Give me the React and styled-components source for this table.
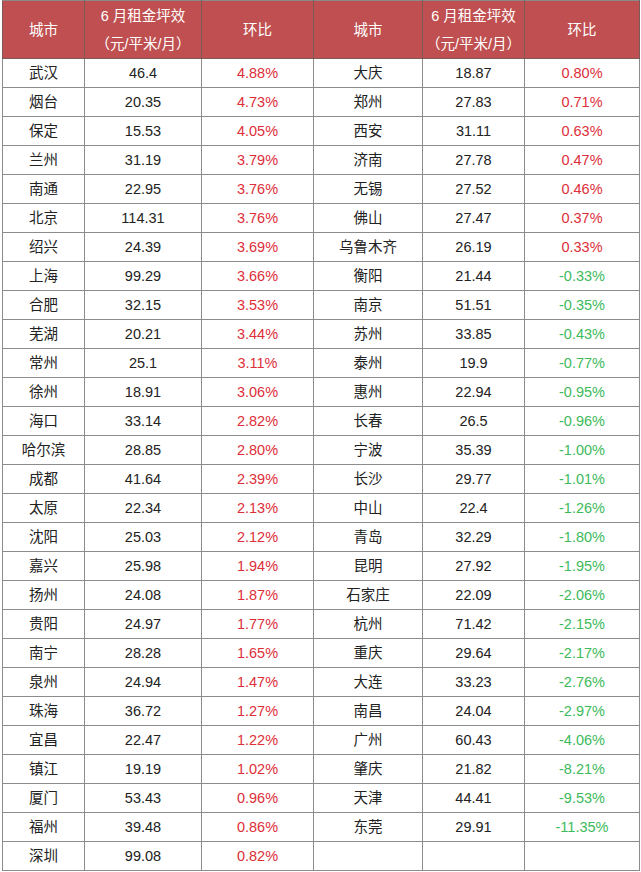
import React from "react";
import styled, { createGlobalStyle } from "styled-components";

const Global = createGlobalStyle`
  html, body { margin: 0; padding: 0; background: #fff; }
  body { font-family: "Liberation Sans", "Noto Sans CJK SC", sans-serif; }
`;

const Wrap = styled.div`
  padding: 0 0 0 2px;
  width: 641px;
  box-sizing: border-box;
`;

const Table = styled.table`
  border-collapse: collapse;
  table-layout: fixed;
  width: 637px;
  font-size: 14.5px;
`;

const Col = styled.col`
  width: ${(p) => p.$w}px;
`;

const HeadCell = styled.th`
  background: #bf4f50;
  color: #fff;
  font-weight: normal;
  height: 57px;
  padding: 0;
  border: 1px solid #7d5a5a;
  border-top-color: #8a8a8a;
  text-align: center;
  vertical-align: middle;
  line-height: 28px;
  font-size: 14.5px;
`;

const Cell = styled.td`
  height: 28px;
  padding: 0;
  border: 1px solid #8c8c8c;
  text-align: center;
  vertical-align: middle;
  color: ${(p) => (p.$tone === "up" ? "#dd2e3a" : p.$tone === "down" ? "#3dba5b" : "#222")};
  line-height: 28px;
`;

const widths = [82, 117, 112, 109, 102, 115];

const left = [
  ["武汉", "46.4", "4.88%"],
  ["烟台", "20.35", "4.73%"],
  ["保定", "15.53", "4.05%"],
  ["兰州", "31.19", "3.79%"],
  ["南通", "22.95", "3.76%"],
  ["北京", "114.31", "3.76%"],
  ["绍兴", "24.39", "3.69%"],
  ["上海", "99.29", "3.66%"],
  ["合肥", "32.15", "3.53%"],
  ["芜湖", "20.21", "3.44%"],
  ["常州", "25.1", "3.11%"],
  ["徐州", "18.91", "3.06%"],
  ["海口", "33.14", "2.82%"],
  ["哈尔滨", "28.85", "2.80%"],
  ["成都", "41.64", "2.39%"],
  ["太原", "22.34", "2.13%"],
  ["沈阳", "25.03", "2.12%"],
  ["嘉兴", "25.98", "1.94%"],
  ["扬州", "24.08", "1.87%"],
  ["贵阳", "24.97", "1.77%"],
  ["南宁", "28.28", "1.65%"],
  ["泉州", "24.94", "1.47%"],
  ["珠海", "36.72", "1.27%"],
  ["宜昌", "22.47", "1.22%"],
  ["镇江", "19.19", "1.02%"],
  ["厦门", "53.43", "0.96%"],
  ["福州", "39.48", "0.86%"],
  ["深圳", "99.08", "0.82%"],
];

const right = [
  ["大庆", "18.87", "0.80%"],
  ["郑州", "27.83", "0.71%"],
  ["西安", "31.11", "0.63%"],
  ["济南", "27.78", "0.47%"],
  ["无锡", "27.52", "0.46%"],
  ["佛山", "27.47", "0.37%"],
  ["乌鲁木齐", "26.19", "0.33%"],
  ["衡阳", "21.44", "-0.33%"],
  ["南京", "51.51", "-0.35%"],
  ["苏州", "33.85", "-0.43%"],
  ["泰州", "19.9", "-0.77%"],
  ["惠州", "22.94", "-0.95%"],
  ["长春", "26.5", "-0.96%"],
  ["宁波", "35.39", "-1.00%"],
  ["长沙", "29.77", "-1.01%"],
  ["中山", "22.4", "-1.26%"],
  ["青岛", "32.29", "-1.80%"],
  ["昆明", "27.92", "-1.95%"],
  ["石家庄", "22.09", "-2.06%"],
  ["杭州", "71.42", "-2.15%"],
  ["重庆", "29.64", "-2.17%"],
  ["大连", "33.23", "-2.76%"],
  ["南昌", "24.04", "-2.97%"],
  ["广州", "60.43", "-4.06%"],
  ["肇庆", "21.82", "-8.21%"],
  ["天津", "44.41", "-9.53%"],
  ["东莞", "29.91", "-11.35%"],
  null,
];

const tone = (v) => (v.startsWith("-") ? "down" : "up");

const Group = ({ row }) =>
  row ? (
    <>
      <Cell>{row[0]}</Cell>
      <Cell>{row[1]}</Cell>
      <Cell $tone={tone(row[2])}>{row[2]}</Cell>
    </>
  ) : (
    <>
      <Cell />
      <Cell />
      <Cell />
    </>
  );

const HeadGroup = () => (
  <>
    <HeadCell>城市</HeadCell>
    <HeadCell>
      6 月租金坪效
      <br />（元/平米/月）
    </HeadCell>
    <HeadCell>环比</HeadCell>
  </>
);

export default function App() {
  return (
    <Wrap>
      <Global />
      <Table>
        <colgroup>
          {widths.map((w, i) => (
            <Col key={i} $w={w} />
          ))}
        </colgroup>
        <thead>
          <tr>
            <HeadGroup />
            <HeadGroup />
          </tr>
        </thead>
        <tbody>
          {left.map((r, i) => (
            <tr key={i}>
              <Group row={r} />
              <Group row={right[i]} />
            </tr>
          ))}
        </tbody>
      </Table>
    </Wrap>
  );
}
